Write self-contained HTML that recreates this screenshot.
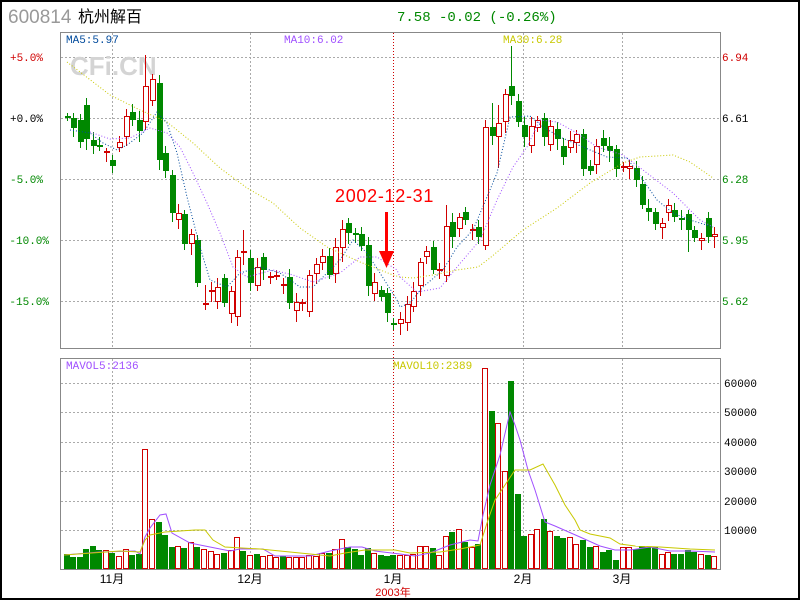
<!DOCTYPE html>
<html><head><meta charset="utf-8"><style>
html,body{margin:0;padding:0;background:#fff;width:800px;height:600px;overflow:hidden}
svg{display:block}
</style></head><body>
<svg id="s" width="800" height="600" xmlns="http://www.w3.org/2000/svg" font-family="Liberation Mono, monospace">
<rect x="1" y="1" width="798" height="598" fill="#fff" stroke="#000" stroke-width="2"/>
<text x="8" y="23" font-family="Liberation Sans, sans-serif" font-size="19" fill="#999">600814</text>
<text x="78" y="22" font-family="Liberation Sans, 'Noto Sans CJK SC', sans-serif" font-size="16" fill="#000">杭州解百</text>
<text x="397" y="21" font-size="14" fill="#008800">7.58 -0.02 (-0.26%)</text>
<g id="grid" stroke="#aaa" stroke-width="1" stroke-dasharray="2,2"></g>
<text x="70" y="75" font-family="Liberation Sans, sans-serif" font-weight="bold" font-size="26" fill="#d4d4d4">CFi.CN</text>
<g id="g"></g>
<rect x="60.5" y="32.5" width="660" height="316" fill="none" stroke="#888"/>
<rect x="60.5" y="358.5" width="660" height="211" fill="none" stroke="#888"/>
<g font-size="11">
<text x="66" y="43" fill="#004a9c">MA5:5.97</text>
<text x="284" y="43" fill="#a050ff">MA10:6.02</text>
<text x="503" y="43" fill="#c8c800">MA30:6.28</text>
<text x="66" y="369" fill="#a050ff">MAVOL5:2136</text>
<text x="393" y="369" fill="#c8c800">MAVOL10:2389</text>
<g text-anchor="end">
<text x="43" y="61" fill="#d00000">+5.0%</text>
<text x="43" y="122" fill="#000">+0.0%</text>
<text x="43" y="183" fill="#008800">-5.0%</text>
<text x="49" y="244" fill="#008800">-10.0%</text>
<text x="49" y="305" fill="#008800">-15.0%</text>
</g>
<text x="722" y="61" fill="#d00000">6.94</text>
<text x="722" y="122" fill="#000">6.61</text>
<text x="722" y="183" fill="#008800">6.28</text>
<text x="722" y="244" fill="#008800">5.95</text>
<text x="722" y="305" fill="#008800">5.62</text>
<text x="724" y="387" fill="#000">60000</text>
<text x="724" y="416" fill="#000">50000</text>
<text x="724" y="446" fill="#000">40000</text>
<text x="724" y="475" fill="#000">30000</text>
<text x="724" y="505" fill="#000">20000</text>
<text x="724" y="534" fill="#000">10000</text>
</g>
<g font-family="Liberation Sans, 'Noto Sans CJK SC', sans-serif" font-size="12" text-anchor="middle">
<text x="112" y="583" fill="#000">11月</text>
<text x="250" y="583" fill="#000">12月</text>
<text x="393" y="583" fill="#000">1月</text>
<text x="523" y="583" fill="#000">2月</text>
<text x="622" y="583" fill="#000">3月</text>
<text x="393" y="596" fill="#d00000" font-size="11">2003年</text>
</g>
<text x="335" y="202" font-family="Liberation Sans, sans-serif" font-size="18" letter-spacing="0.7" fill="#ff0000">2002-12-31</text>
<rect x="385" y="212" width="3" height="42" fill="#ff0000"/>
<polygon points="379,251 394,251 386.5,268" fill="#ff0000"/>
</svg>
<script>
var NS="http://www.w3.org/2000/svg",G=document.getElementById('g'),GR=document.getElementById('grid');
function el(t,a,p){var e=document.createElementNS(NS,t);for(var k in a)e.setAttribute(k,a[k]);(p||G).appendChild(e);return e;}
[57,118,179,240,301,383,412,442,471,501,530].forEach(function(y){el('line',{x1:61,x2:720,y1:y+.5,y2:y+.5},GR);});
[112,250,523,622].forEach(function(x){el('line',{x1:x+.5,x2:x+.5,y1:33,y2:348},GR);el('line',{x1:x+.5,x2:x+.5,y1:359,y2:569},GR);});
el('line',{x1:393.5,x2:393.5,y1:33,y2:569,stroke:'#d00000','stroke-dasharray':'1,2'},GR);
var C="67,117,117,g;73,118,128,g;80,120,142,g;86,105,139,g;93,140,146,g;99,146,146,g;106,152,152,r;112,160,166,g;119,142,148,r;126,116,137,r;132,112,120,g;139,120,131,g;145,86,122,r;152,79,101,r;159,83,160,g;165,153,171,g;172,175,213,g;178,213,220,r;184,214,244,g;191,234,244,r;197,240,283,g;205,304,304,r;211,290,292,r;217,287,302,r;224,278,303,g;231,291,314,r;237,257,317,r;243,252,253,r;250,258,283,g;257,267,286,r;263,257,270,g;270,277,277,r;276,276,276,r;283,285,285,r;289,277,303,g;296,302,311,r;302,303,303,r;309,275,312,r;316,264,274,r;322,256,263,r;329,256,275,g;335,247,274,r;342,229,248,r;348,223,233,g;355,234,235,g;361,234,246,g;368,245,286,g;374,282,294,r;381,290,297,g;387,293,313,g;393,324,324,g;400,319,324,r;407,304,323,r;413,291,307,r;420,262,286,r;426,251,257,r;433,247,270,g;439,270,270,r;446,226,276,r;452,222,237,g;459,217,229,r;465,212,220,g;472,230,230,r;478,227,237,g;485,127,246,r;492,127,136,g;498,123,137,r;505,94,122,r;511,86,96,g;518,101,122,g;524,125,137,g;531,126,146,r;537,120,128,r;544,118,137,g;550,126,145,r;557,129,139,g;563,146,157,g;570,140,148,r;576,134,143,r;583,134,169,g;590,166,171,g;596,146,165,r;603,138,146,g;609,146,151,g;616,149,169,g;623,167,167,r;629,166,169,r;636,168,180,g;642,184,205,g;648,208,212,g;655,212,224,g;662,223,228,r;668,205,213,r;674,210,217,g;681,218,220,g;688,214,230,g;694,230,238,g;701,238,241,r;708,218,237,g;714,234,237,r";
var W={145:[55,130],511:[46,105],159:[75,170],485:[120,250],237:[250,326],243:[230,265],172:[170,222],197:[235,287],342:[220,262],446:[205,282],492:[103,145],498:[105,168],688:[210,252],205:[285,310]};
C.split(';').forEach(function(s,i){var p=s.split(','),x=+p[0],t=+p[1],b=+p[2],c=p[3]=='g'?'#008800':'#d00000';
var w=W[x]||[t-4-(i*7%6),b+4+(i*5%8)];
el('line',{x1:x+.5,x2:x+.5,y1:w[0],y2:w[1],stroke:c});
if(b-t<2)el('rect',{x:x-2,y:t-1,width:6,height:2,fill:c});
else if(p[3]=='g')el('rect',{x:x-2,y:t,width:6,height:b-t,fill:c});
else el('rect',{x:x-1.5,y:t+.5,width:5,height:b-t-1,fill:'#fff',stroke:c});});
var V="67,554,g;73,557,g;80,557,g;86,549,g;93,546,g;99,550,g;106,550,r;112,553,g;119,556,r;126,549,r;132,555,g;139,554,g;145,449,r;152,519,r;159,522,g;165,535,g;172,547,g;178,546,r;184,548,g;191,542,r;197,547,g;204,549,r;211,551,r;217,554,r;224,553,g;231,550,r;237,537,r;243,551,g;250,555,r;257,554,g;263,556,r;270,555,r;276,557,r;283,556,g;289,557,r;296,557,r;302,557,r;309,555,r;316,556,r;322,553,r;329,553,g;335,549,r;342,539,r;348,547,g;355,549,g;361,555,g;368,548,g;374,553,r;381,555,g;387,556,g;393,555,g;400,555,r;407,555,r;413,554,r;420,546,r;426,546,r;433,548,g;439,555,r;446,536,r;452,532,g;459,529,r;465,542,g;472,547,r;478,544,g;485,368,r;492,411,g;498,423,r;505,471,r;511,381,g;518,494,g;524,536,g;531,534,r;537,529,r;544,519,g;550,531,r;557,536,g;563,538,g;570,537,r;576,544,r;583,540,g;590,547,g;596,546,r;603,552,g;609,550,g;616,560,g;623,547,r;629,547,r;636,549,g;642,546,g;648,547,g;655,547,g;662,554,r;668,552,r;674,554,g;681,554,g;688,550,g;694,552,g;701,554,r;708,555,g;714,556,r";
V.split(';').forEach(function(s){var p=s.split(','),x=+p[0],t=+p[1];
if(p[2]=='g')el('rect',{x:x-3,y:t,width:6,height:569-t,fill:'#008800'});
else el('rect',{x:x-2.5,y:t+.5,width:5,height:568-t,fill:'#fff',stroke:'#d00000'});});
function pl(pts,c,d){var a={points:pts,fill:'none',stroke:c,'stroke-width':1};if(d)a['stroke-dasharray']=d;el('polyline',a);}
pl("67,62 110,95 140,110 167,122 193,143 220,168 247,188 273,203 300,228 327,247 360,262 393,275 400,277 413,278 433,275 457,270 478,267 490,258 523,230 557,208 590,183 623,163 640,157 673,155 690,162 713,178","#c8c800","1,2");
pl("90,132 110,139 130,138 150,128 167,133 180,147 193,173 207,203 220,233 233,267 247,277 273,270 293,275 313,282 340,273 360,257 377,257 397,270 400,277 417,292 440,288 457,267 480,240 497,200 513,167 527,147 540,120 557,122 577,133 597,147 623,155 643,170 673,193 700,220 713,227","#a050ff","1,2");
pl("70,130 90,133 103,143 117,150 127,145 143,133 157,112 167,123 177,153 187,197 200,247 210,280 227,287 240,273 260,267 280,273 300,287 313,287 327,273 340,260 353,240 367,253 380,273 397,300 400,307 410,303 423,287 443,270 457,247 473,230 487,197 497,173 510,117 530,116 543,127 560,137 583,147 607,157 627,158 643,180 657,200 673,213 690,220 713,227","#004a9c","1,2");
pl("64,555 100,552 135,551 140,554 145,537 150,528 160,515 166,514 172,533 190,543 230,551 240,549 263,549 275,556 310,556 330,551 350,547 362,547 375,551 400,554 415,556 430,553 450,545 470,540 478,541 483,515 490,485 500,455 510,412 515,425 520,440 528,470 535,490 545,522 555,526 580,537 600,546 615,550 630,550 650,547 670,551 690,551 715,552","#a050ff");
pl("64,555 120,551 140,552 145,540 150,535 165,532 195,530 205,530 213,540 225,547 260,549 290,552 310,554 330,556 345,553 365,550 395,550 410,553 440,552 460,549 475,546 480,545 488,520 495,500 505,485 515,470 530,470 543,464 555,485 565,505 575,520 580,530 590,534 610,538 620,544 635,546 660,547 690,549 715,550","#c8c800");
</script>
</body></html>
